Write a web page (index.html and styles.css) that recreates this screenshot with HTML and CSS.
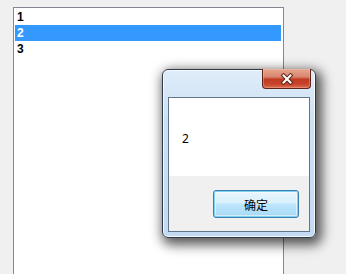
FILE: index.html
```html
<!DOCTYPE html>
<html>
<head>
<meta charset="utf-8">
<link rel="stylesheet" href="styles.css">
</head>
<body>
<div class="page">
  <div class="listbox">
    <div class="item">1</div>
    <div class="item selected">2</div>
    <div class="item">3</div>
  </div>
</div>
<div class="dialog">
  <div class="titlebar">
    <div class="close">
      <svg width="14" height="12" viewBox="0 0 14 12">
        <path d="M3.5 2.5 L10.5 9.5 M10.5 2.5 L3.5 9.5" stroke="#5a2418" stroke-width="4" stroke-linecap="square" fill="none"/>
        <path d="M3.5 2.5 L10.5 9.5 M10.5 2.5 L3.5 9.5" stroke="#ffffff" stroke-width="2" stroke-linecap="square" fill="none"/>
      </svg>
    </div>
  </div>
  <div class="client">
    <div class="message">2</div>
    <div class="actions">
      <button class="ok">确定</button>
    </div>
  </div>
</div>
</body>
</html>
```
FILE: styles.css
```css
html, body {
  margin: 0;
  padding: 0;
  background: #f0f0f0;
  width: 346px;
  height: 274px;
  overflow: hidden;
}
.page {
  padding: 7px 0 0 13px;
}
.listbox {
  width: 271px;
  height: 280px;
  background: #ffffff;
  border: 1px solid #828790;
  padding: 1px 0 0 1px;
  box-sizing: border-box;
}
.item {
  height: 16px;
  line-height: 16px;
  padding-left: 2px;
  margin-right: 2px;
  font-family: "Liberation Sans", Arial, sans-serif;
  font-weight: bold;
  font-size: 12px;
  color: #000;
}
.item.selected {
  background: #3399ff;
  color: #fff;
}
.dialog {
  position: absolute;
  left: 162px;
  top: 69px;
  width: 154px;
  height: 169px;
  box-sizing: border-box;
  border: 1px solid #2f3b48;
  border-radius: 6px;
  background: linear-gradient(to bottom, #dfecf9 0%, #cde1f6 30%, #c4daf2 100%);
  box-shadow: 3px 4px 12px 3px rgba(0,0,0,0.65), inset 0 0 0 1px rgba(255,255,255,0.75);
  display: flex;
  flex-direction: column;
}
.titlebar {
  height: 27px;
  display: flex;
  justify-content: flex-end;
  padding-right: 4px;
}
.close {
  width: 49px;
  height: 20px;
  margin-top: -1px;
  box-sizing: border-box;
  border: 1px solid #5e2217;
  border-top: none;
  border-radius: 0 0 4px 4px;
  background: linear-gradient(to bottom, #e7a58f 0%, #d98770 40%, #c13a22 55%, #c8442b 80%, #dc6e50 100%);
  display: flex;
  align-items: center;
  justify-content: center;
  box-shadow: inset 0 0 0 1px rgba(255,200,180,0.35);
}
.client {
  flex: 1;
  margin: 0 5px 5px 5px;
  border: 1px solid #62768a;
  display: flex;
  flex-direction: column;
  background: #f0f0f0;
}
.message {
  height: 78px;
  background: #ffffff;
  box-sizing: border-box;
  padding: 33px 0 0 13px;
  font-family: "Noto Sans", "DejaVu Sans", sans-serif;
  font-size: 12px;
  line-height: 16px;
  color: #000;
}
.actions {
  flex: 1;
  display: flex;
  justify-content: flex-end;
  align-items: flex-start;
  padding: 14px 10px 0 0;
}
.ok {
  width: 86px;
  height: 28px;
  margin: 0;
  border: 1px solid #3c7fb1;
  border-radius: 3px;
  background: linear-gradient(to bottom, #eaf6fd 0%, #d9f0fc 45%, #bee6fd 50%, #a7d9f5 100%);
  box-shadow: inset 0 0 0 1px #7fd1f4, inset 0 0 0 2px rgba(255,255,255,0.5);
  font-family: "Noto Sans CJK SC", sans-serif;
  font-size: 12px;
  color: #000;
  padding: 0;
}
```
